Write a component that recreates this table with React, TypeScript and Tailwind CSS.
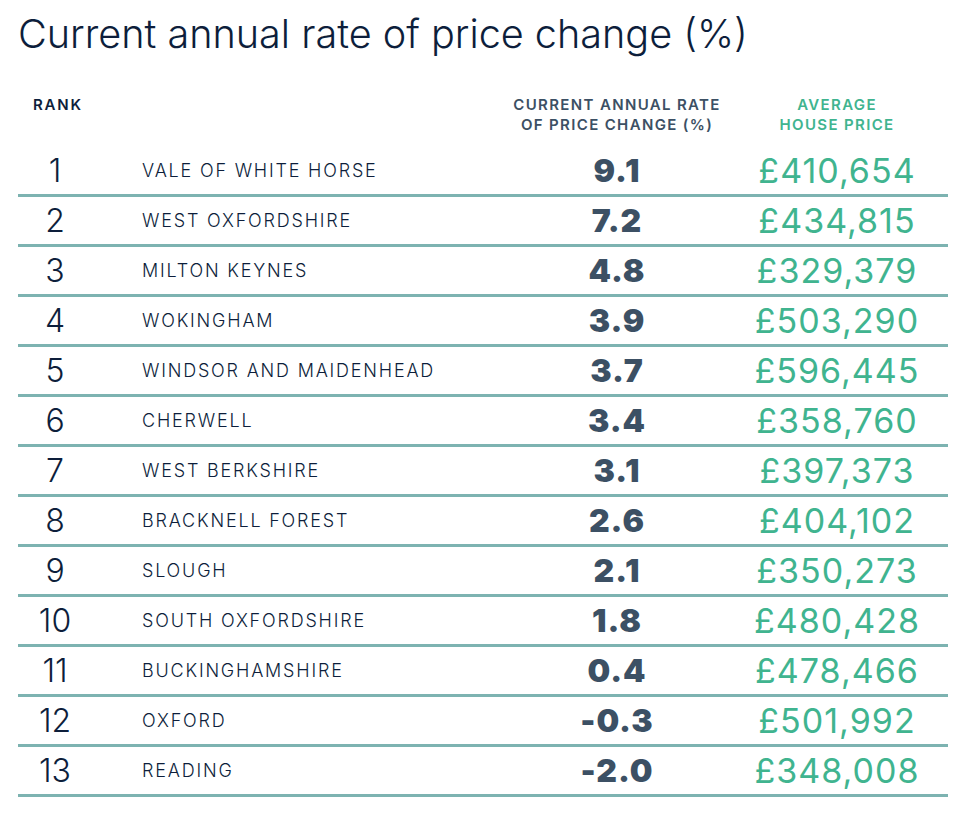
const rows = [
  { rank: 1, name: "VALE OF WHITE HORSE", rate: "9.1", price: "£410,654" },
  { rank: 2, name: "WEST OXFORDSHIRE", rate: "7.2", price: "£434,815" },
  { rank: 3, name: "MILTON KEYNES", rate: "4.8", price: "£329,379" },
  { rank: 4, name: "WOKINGHAM", rate: "3.9", price: "£503,290" },
  { rank: 5, name: "WINDSOR AND MAIDENHEAD", rate: "3.7", price: "£596,445" },
  { rank: 6, name: "CHERWELL", rate: "3.4", price: "£358,760" },
  { rank: 7, name: "WEST BERKSHIRE", rate: "3.1", price: "£397,373" },
  { rank: 8, name: "BRACKNELL FOREST", rate: "2.6", price: "£404,102" },
  { rank: 9, name: "SLOUGH", rate: "2.1", price: "£350,273" },
  { rank: 10, name: "SOUTH OXFORDSHIRE", rate: "1.8", price: "£480,428" },
  { rank: 11, name: "BUCKINGHAMSHIRE", rate: "0.4", price: "£478,466" },
  { rank: 12, name: "OXFORD", rate: "-0.3", price: "£501,992" },
  { rank: 13, name: "READING", rate: "-2.0", price: "£348,008" },
];

const App = () => {
  return (
    <div className="min-h-screen bg-white font-['Inter','Liberation_Sans',sans-serif] text-[#0d1e3b]">
      <div className="w-[930px] ml-[18px] pt-[8px]">
        {/* Title */}
        <h1 className="h-[52px] text-[39.6px] leading-[52px] font-light whitespace-nowrap">
          Current annual rate of price change (%)
        </h1>

        {/* Column headers */}
        <div className="grid grid-cols-[74px_440px_170px_1fr] mt-[35px] h-[52px] text-[15px] leading-[20px] font-semibold tracking-[0.09em] whitespace-nowrap">
          <div className="pl-[15px] tracking-[0.12em] text-[#0d1e3b]">RANK</div>
          <div></div>
          <div className="flex flex-col items-center text-center text-[#3c5064]">
            <span>CURRENT ANNUAL RATE</span>
            <span>OF PRICE CHANGE (%)</span>
          </div>
          <div className="flex flex-col items-center text-center pl-[24px] text-[#40b48f]">
            <span>AVERAGE</span>
            <span>HOUSE PRICE</span>
          </div>
        </div>

        {/* Rows */}
        {rows.map((r) => (
          <div key={r.rank}>
            <div className="grid grid-cols-[74px_440px_170px_1fr] items-center h-[47px] whitespace-nowrap">
              <div className="text-center text-[32px] font-light leading-none">{r.rank}</div>
              <div className="pl-[50px] text-[18px] font-light tracking-[0.1em]">{r.name}</div>
              <div className="text-center text-[32px] font-black tracking-[0.03em] text-[#3c5064] leading-none">
                {r.rate}
              </div>
              <div className="text-center pl-[24px] text-[34px] font-normal tracking-[0.03em] text-[#40b48f] leading-none">
                {r.price}
              </div>
            </div>
            <div className="h-[3px] bg-[#7db3b1]"></div>
          </div>
        ))}
      </div>
    </div>
  );
};

export default App;
